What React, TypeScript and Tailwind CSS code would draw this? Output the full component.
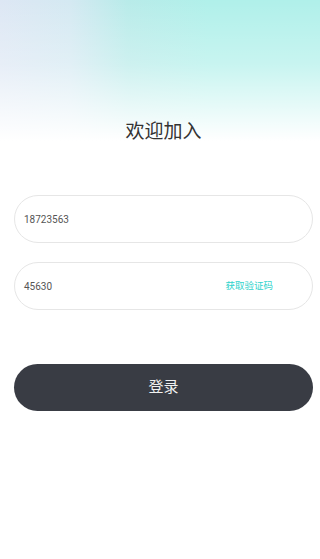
export default function App() {
  return (
    <div
      className="min-h-[559px] w-full bg-white bg-no-repeat bg-[length:100%_160px] bg-[linear-gradient(to_bottom,rgba(255,255,255,0)_0%,rgba(255,255,255,0.3)_40%,#ffffff_88%),linear-gradient(to_right,#dde7f4_0%,#d4e9f2_22%,#b8ebe9_40%,#b0f0ea_65%,#b0f0ea_100%)] pl-[14px] pr-[7px] pt-[118px]"
      style={{ fontFamily: 'Roboto, "Noto Sans CJK SC", sans-serif' }}
    >
      <h1 className="text-center text-[19px] leading-[28px] text-[#333]">欢迎加入</h1>

      <div className="mt-[49px] flex flex-col gap-[19px]">
        <div className="flex h-[48px] items-center rounded-full border border-[#e6e6e6] bg-white pl-[9px] pr-[40px]">
          <span className="text-[10px] text-[#555]">18723563</span>
        </div>
        <div className="flex h-[48px] items-center justify-between rounded-full border border-[#e6e6e6] bg-white pl-[9px] pr-[39px]">
          <span className="text-[10px] text-[#555]">45630</span>
          <span className="text-[9.5px] text-[#2fd3cc]">获取验证码</span>
        </div>
      </div>

      <button className="mt-[54px] flex h-[47px] w-full items-center justify-center rounded-full bg-[#393c44] text-[15px] text-[#f0f0f0]">
        登录
      </button>
    </div>
  );
}
